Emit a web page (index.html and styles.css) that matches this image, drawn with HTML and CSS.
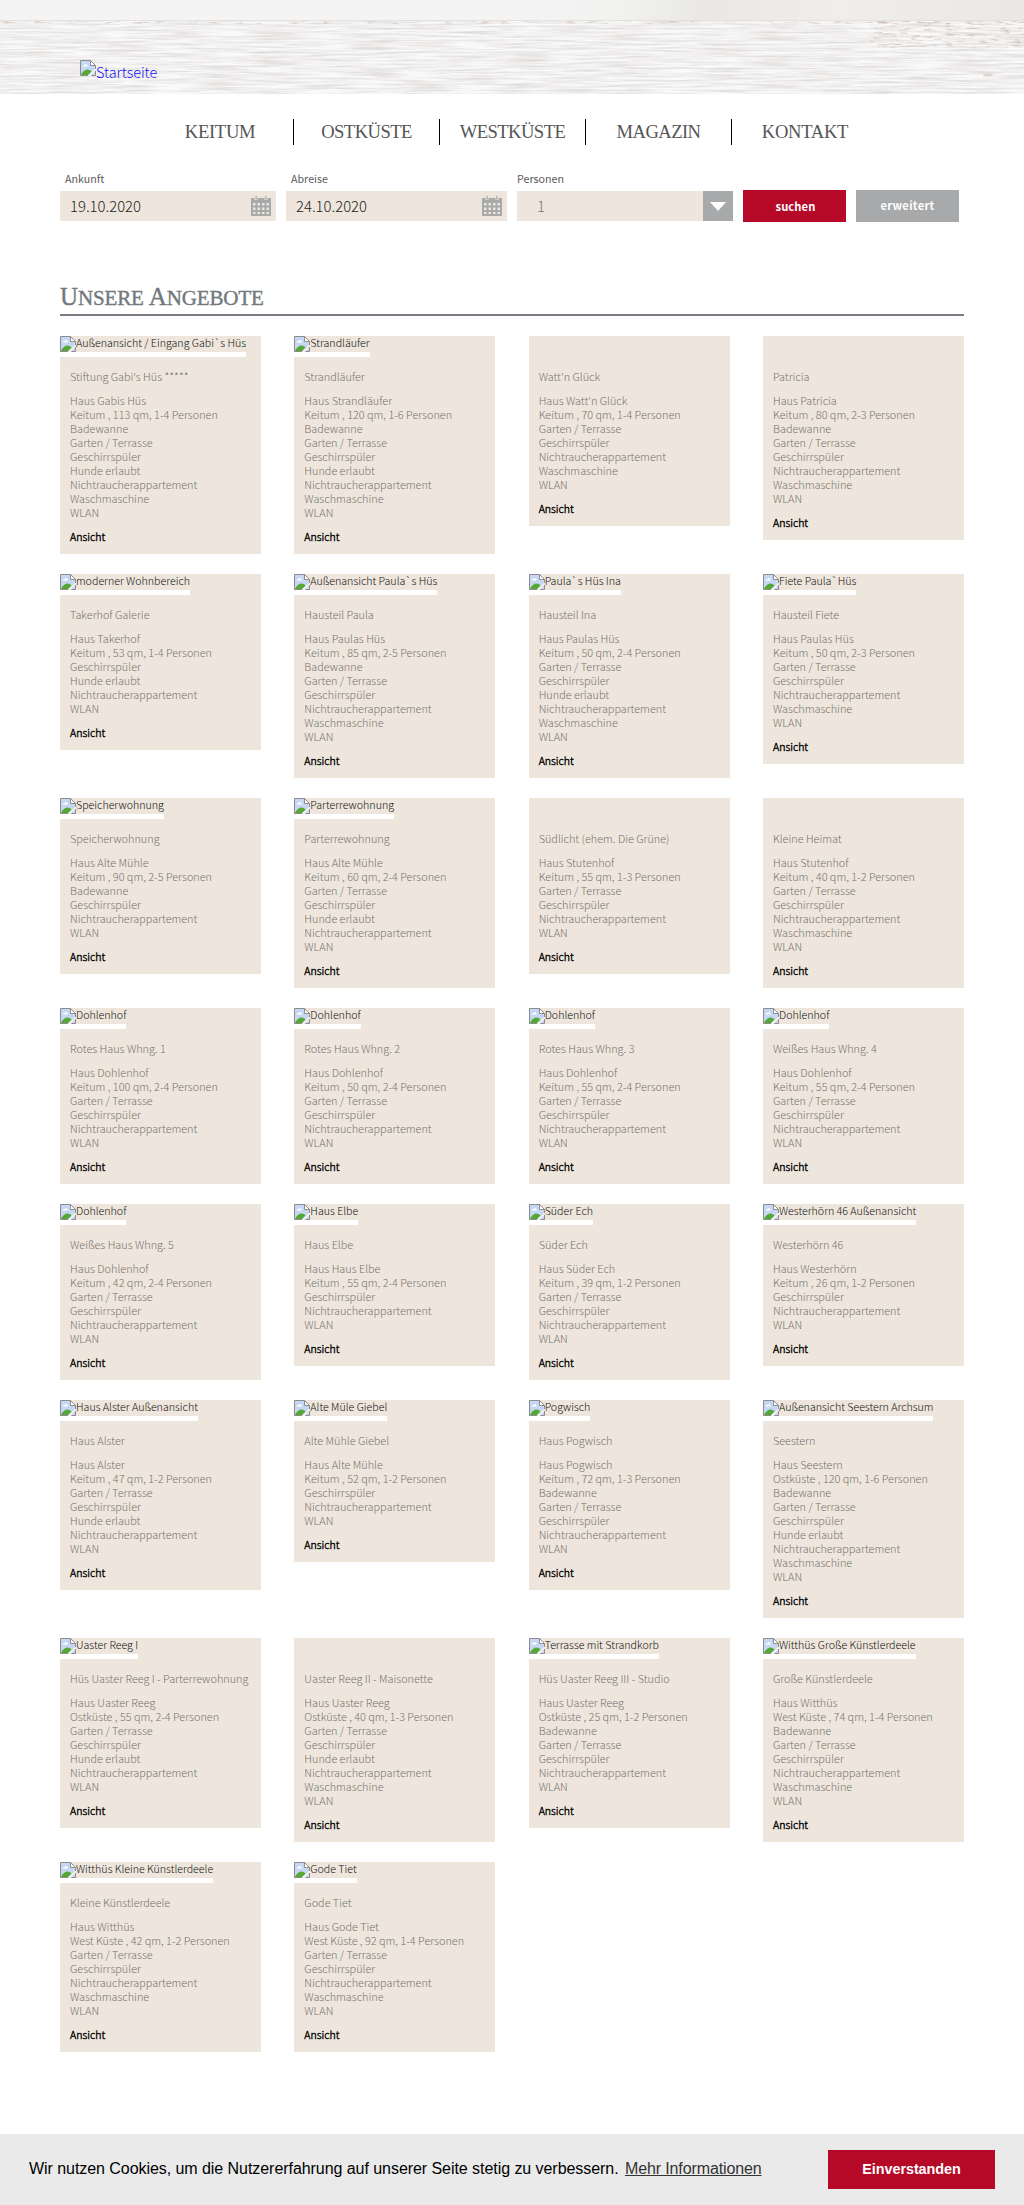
FILE: index.html
```html
<!DOCTYPE html>
<html lang="de">
<head>
<meta charset="utf-8">
<title>Unsere Angebote</title>
<link rel="stylesheet" href="styles.css">
</head>
<body>
<svg class="defs" width="0" height="0" aria-hidden="true">
  <symbol id="broken" viewBox="0 0 16 16">
    <path d="M.5.5h10l5 5v10H.5z" fill="#c5d7f5"/>
    <path d="M2.5 6.500c0-1 1-1.500 1.700-1.200C5 3.500 7 4 7.200 5.300 8 5.500 8 6.500 7.500 6.500z" fill="#fff"/>
    <path d="M1 15c1-3 4-5.500 6.500-5.500 2 0 3 1 4 2L8 15z" fill="#55a834"/>
    <path d="M7.500 16 16 8v2.500L10.500 16z" fill="#f4f0ea"/>
    <path d="M.5 15.500V.5h10l5 5V9M.5 15.500H8M11.500 15.500h4V11" fill="none" stroke="#8c8c8c"/>
    <path d="M10.500.5v5h5z" fill="#fff" stroke="#8c8c8c"/>
  </symbol>
  <symbol id="calendar" viewBox="0 0 20 20">
    <path d="M0 2h20v18H0z" fill="#a7a9ab"/>
    <path d="M3.500 0h3v4h-3zM13.500 0h3v4h-3z" fill="#eee6dc"/>
    <path d="M4.500 0h1.300v3.500H4.500zM14.200 0h1.300v3.500h-1.300z" fill="#a7a9ab"/>
    <path d="M2 7h2.500v2.500H2zM6.500 7H9v2.500H6.500zM11 7h2.500v2.500H11zM15.500 7H18v2.500h-2.500zM2 11.500h2.500V14H2zM6.500 11.500H9V14H6.500zM11 11.500h2.500V14H11zM15.500 11.500H18V14h-2.500zM2 16h2.500v2H2zM6.500 16H9v2H6.500zM11 16h2.500v2H11zM15.500 16H18v2h-2.500z" fill="#eee6dc"/>
  </symbol>
</svg>
<header class="header">
  <svg class="wood" width="1024" height="74" aria-hidden="true">
    <filter id="grain" x="0" y="0" width="100%" height="100%" color-interpolation-filters="sRGB">
      <feTurbulence type="fractalNoise" baseFrequency="0.02 0.5" numOctaves="3" seed="8"/>
      <feColorMatrix values="0 0 0 0 .84  0 0 0 0 .83  0 0 0 0 .82  1.500 0 0 0 -.5"/>
    </filter>
    <filter id="specks" x="0" y="0" width="100%" height="100%" color-interpolation-filters="sRGB">
      <feTurbulence type="fractalNoise" baseFrequency="0.09 0.5" numOctaves="3" seed="3"/>
      <feColorMatrix values="0 0 0 0 .78  0 0 0 0 .72  0 0 0 0 .67  3 0 0 0 -1.600"/>
    </filter>
    <rect width="1024" height="74" fill="#faf9f9"/>
    <rect width="1024" height="74" filter="url(#grain)"/>
    <rect width="1024" height="4" filter="url(#specks)" opacity=".7"/>
    <rect x="870" width="154" height="28" filter="url(#specks)" opacity=".8"/>
    <rect width="1024" height="1" fill="#e3e0dd"/>
    <ellipse cx="988" cy="55" rx="5" ry="1.500" fill="#ddd4ce"/>
  </svg>
  <a class="logo"><svg width="16" height="16"><use href="#broken"/></svg><span>Startseite</span></a>
</header>
<nav class="nav"><a>KEITUM</a><a>OSTKÜSTE</a><a>WESTKÜSTE</a><a>MAGAZIN</a><a>KONTAKT</a></nav>
<form class="search">
  <div class="field arrival"><label>Ankunft</label><div class="input"><span>19.10.2020</span><svg width="20" height="20"><use href="#calendar"/></svg></div></div>
  <div class="field departure"><label>Abreise</label><div class="input"><span>24.10.2020</span><svg width="20" height="20"><use href="#calendar"/></svg></div></div>
  <div class="field persons"><label>Personen</label><div class="input select"><span>1</span><i><svg width="16" height="9"><path d="M0 0h16L8 9z" fill="#fff"/></svg></i></div></div>
  <div class="btn go">suchen</div>
  <div class="btn more">erweitert</div>
</form>
<main class="main">
  <h1><span class="cap">U</span>NSERE <span class="cap">A</span>NGEBOTE</h1>
  <div class="grid" id="offers"></div>
</main>
<footer class="cookie">
  <p>Wir nutzen Cookies, um die Nutzererfahrung auf unserer Seite stetig zu verbessern. <a>Mehr Informationen</a></p>
  <div class="accept">Einverstanden</div>
</footer>
<script src="offers.js"></script>
</body>
</html>
```
FILE: styles.css
```css
* { box-sizing: border-box; }
body {
  margin: 0;
  min-height: 2205px;
  display: flex;
  flex-direction: column;
  background: #fff;
  font: 300 10.85px/14px "Noto Sans CJK SC", sans-serif;
  color: #757370;
}
.defs { position: absolute; }
svg { display: block; flex: none; }

.header {
  position: relative;
  height: 94px;
  padding-top: 20px;
  background: linear-gradient(90deg, #f4f4f4 0 48%, #f2f2f1 60%, #e9e8e4 69%, #efeeeb 82%, #e9e8e4);
}
.logo {
  position: absolute;
  left: 80px;
  top: 60px;
  display: flex;
  font-size: 14.4px;
  line-height: 24px;
  color: #1414f0;
}

.nav {
  display: flex;
  height: 26px;
  margin: 25px 0 0 147px;
  font: 18.6px/26px "Liberation Serif", serif;
  letter-spacing: -.55px;
  color: #555;
}
.nav a { width: 146px; text-align: center; border-right: 1px solid #000; }
.nav a:first-child { width: 147px; letter-spacing: -.3px; }
.nav a:last-child { border: 0; letter-spacing: -.3px; }

.search {
  display: flex;
  align-items: flex-end;
  gap: 10px;
  margin: 27px 0 0 60px;
  height: 50px;
}
.field { height: 49px; margin-bottom: 1px; }
.field label {
  display: block;
  height: 19px;
  padding-left: 5px;
  font-size: 10.7px;
  font-weight: 400;
  color: #5a5a5a;
}
.persons label { padding-left: 0; }
.arrival { width: 216px; }
.departure { width: 221px; }
.persons { width: 216px; }
.input {
  display: flex;
  align-items: center;
  justify-content: space-between;
  height: 30px;
  padding: 0 5px 0 10px;
  background: #eee6dc;
  font-size: 14.85px;
  color: #222;
}
.select { padding: 0 0 0 20px; color: #757370; }
.select i {
  display: flex;
  align-items: center;
  justify-content: center;
  width: 30px;
  height: 30px;
  background: #a7a9ab;
}
.btn {
  width: 103px;
  height: 32px;
  text-align: center;
  font-weight: 700;
  font-size: 11.2px;
  line-height: 31px;
  letter-spacing: .3px;
  color: #fff;
}
.go { padding-left: 2px; background: #b50927; line-height: 33px; letter-spacing: .1px; }
.more { background: #a7a9ab; }

.main { width: 904px; margin: 59px 0 0 60px; }
h1 {
  margin: 0;
  height: 35px;
  border-bottom: 2px solid #777d82;
  font: 21px/32px "Liberation Serif", serif;
  letter-spacing: -.15px;
  color: #72797d;
  -webkit-text-stroke: .4px #72797d;
}
h1 .cap { font-size: 25px; }
.grid {
  display: grid;
  grid-template-columns: repeat(4, 201px);
  justify-content: space-between;
  align-items: start;
  row-gap: 20px;
  margin-top: 20px;
}
.card { padding-bottom: 10px; background: #eee6dc; }
.photo { height: 33px; }
.alt {
  display: inline-flex;
  height: 21px;
  border-bottom: 5px solid #fff;
  font-size: 10.65px;
  white-space: nowrap;
  color: #111;
}
.card p { margin: 0 10px 10px; white-space: nowrap; }
.card .view {
  margin-top: 11px;
  margin-bottom: 0;
  font-size: 10.55px;
  color: #000;
  -webkit-text-stroke: .4px #000;
}

.cookie {
  display: flex;
  align-items: center;
  justify-content: space-between;
  height: 71px;
  margin-top: auto;
  padding: 0 29px;
  background: #eaeaea;
  font: 16px/24px "Liberation Sans", Helvetica, sans-serif;
  letter-spacing: -.055px;
  color: #000;
}
.cookie p { margin: 0 0 1px; }
.cookie a { margin-left: 2px; letter-spacing: -.12px; color: #333; text-decoration: underline; }
.accept {
  width: 167px;
  height: 39px;
  background: #b50927;
  color: #fff;
  text-align: center;
  font-weight: 700;
  font-size: 14.4px;
  line-height: 39px;
}
```
FILE: offers.js
```js
// Feature codes, listed in display order.
const FEATURES = {
  B: "Badewanne",
  T: "Garten / Terrasse",
  G: "Geschirrspüler",
  H: "Hunde erlaubt",
  N: "Nichtraucherappartement",
  W: "Waschmaschine",
  L: "WLAN",
};

// photo text | title | house | place, size, persons | features
const OFFERS = `
Außenansicht / Eingang Gabi\`s Hüs|Stiftung Gabi's Hüs *****|Haus Gabis Hüs|Keitum , 113 qm, 1-4|BTGHNWL
Strandläufer|Strandläufer|Haus Strandläufer|Keitum , 120 qm, 1-6|BTGHNWL
|Watt'n Glück|Haus Watt'n Glück|Keitum , 70 qm, 1-4|TGNWL
|Patricia|Haus Patricia|Keitum , 80 qm, 2-3|BTGNWL
moderner Wohnbereich|Takerhof Galerie|Haus Takerhof|Keitum , 53 qm, 1-4|GHNL
Außenansicht Paula\`s Hüs|Hausteil Paula|Haus Paulas Hüs|Keitum , 85 qm, 2-5|BTGNWL
Paula\`s Hüs Ina|Hausteil Ina|Haus Paulas Hüs|Keitum , 50 qm, 2-4|TGHNWL
Fiete Paula\`Hüs|Hausteil Fiete|Haus Paulas Hüs|Keitum , 50 qm, 2-3|TGNWL
Speicherwohnung|Speicherwohnung|Haus Alte Mühle|Keitum , 90 qm, 2-5|BGNL
Parterrewohnung|Parterrewohnung|Haus Alte Mühle|Keitum , 60 qm, 2-4|TGHNL
|Südlicht (ehem. Die Grüne)|Haus Stutenhof|Keitum , 55 qm, 1-3|TGNL
|Kleine Heimat|Haus Stutenhof|Keitum , 40 qm, 1-2|TGNWL
Dohlenhof|Rotes Haus Whng. 1|Haus Dohlenhof|Keitum , 100 qm, 2-4|TGNL
Dohlenhof|Rotes Haus Whng. 2|Haus Dohlenhof|Keitum , 50 qm, 2-4|TGNL
Dohlenhof|Rotes Haus Whng. 3|Haus Dohlenhof|Keitum , 55 qm, 2-4|TGNL
Dohlenhof|Weißes Haus Whng. 4|Haus Dohlenhof|Keitum , 55 qm, 2-4|TGNL
Dohlenhof|Weißes Haus Whng. 5|Haus Dohlenhof|Keitum , 42 qm, 2-4|TGNL
Haus Elbe|Haus Elbe|Haus Haus Elbe|Keitum , 55 qm, 2-4|GNL
Süder Ech|Süder Ech|Haus Süder Ech|Keitum , 39 qm, 1-2|TGNL
Westerhörn 46 Außenansicht|Westerhörn 46|Haus Westerhörn|Keitum , 26 qm, 1-2|GNL
Haus Alster Außenansicht|Haus Alster|Haus Alster|Keitum , 47 qm, 1-2|TGHNL
Alte Müle Giebel|Alte Mühle Giebel|Haus Alte Mühle|Keitum , 52 qm, 1-2|GNL
Pogwisch|Haus Pogwisch|Haus Pogwisch|Keitum , 72 qm, 1-3|BTGNL
Außenansicht Seestern Archsum|Seestern|Haus Seestern|Ostküste , 120 qm, 1-6|BTGHNWL
Uaster Reeg I|Hüs Uaster Reeg I - Parterrewohnung|Haus Uaster Reeg|Ostküste , 55 qm, 2-4|TGHNL
|Uaster Reeg II - Maisonette|Haus Uaster Reeg|Ostküste , 40 qm, 1-3|TGHNWL
Terrasse mit Strandkorb|Hüs Uaster Reeg III - Studio|Haus Uaster Reeg|Ostküste , 25 qm, 1-2|BTGNL
Witthüs Große Künstlerdeele|Große Künstlerdeele|Haus Witthüs|West Küste , 74 qm, 1-4|BTGNWL
Witthüs Kleine Künstlerdeele|Kleine Künstlerdeele|Haus Witthüs|West Küste , 42 qm, 1-2|TGNWL
Gode Tiet|Gode Tiet|Haus Gode Tiet|West Küste , 92 qm, 1-4|TGNWL
`.trim().split("\n");

document.getElementById("offers").innerHTML = OFFERS.map((row) => {
  const [photo, title, house, place, codes] = row.split("|");
  const alt = photo
    ? `<div class="alt"><svg width="16" height="16"><use href="#broken"/></svg><span>${photo}</span></div>`
    : "";
  const lines = [house, place + " Personen", ...[...codes].map((c) => FEATURES[c])];
  return `<article class="card"><div class="photo">${alt}</div><p>${title}</p><p>${lines.join("<br>")}</p><p class="view">Ansicht</p></article>`;
}).join("");
```
